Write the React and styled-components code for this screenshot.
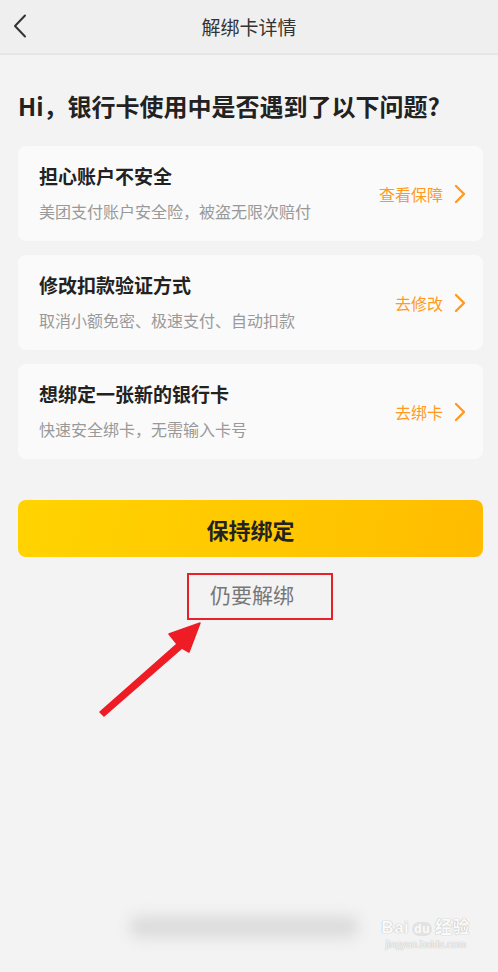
import styled, { createGlobalStyle } from "styled-components";

const GlobalStyle = createGlobalStyle`
  html, body {
    margin: 0;
    padding: 0;
    background: #f3f3f3;
  }
  body {
    font-family: "Noto Sans CJK SC", "Noto Sans", "Liberation Sans", sans-serif;
  }
`;

const options = [
  {
    title: "担心账户不安全",
    desc: "美团支付账户安全险，被盗无限次赔付",
    action: "查看保障",
  },
  {
    title: "修改扣款验证方式",
    desc: "取消小额免密、极速支付、自动扣款",
    action: "去修改",
  },
  {
    title: "想绑定一张新的银行卡",
    desc: "快速安全绑卡，无需输入卡号",
    action: "去绑卡",
  },
];

const Chevron = ({ color, width, height, stroke }) => (
  <svg width={width} height={height} viewBox="0 0 12 20" fill="none">
    <path
      d="M2 2 L10 10 L2 18"
      stroke={color}
      strokeWidth={stroke}
      strokeLinecap="round"
      strokeLinejoin="round"
    />
  </svg>
);

const BackArrow = () => (
  <svg width="14" height="24" viewBox="0 0 14 24" fill="none">
    <path
      d="M12 1.5 L2 12 L12 22.5"
      stroke="#333"
      strokeWidth="2"
      strokeLinecap="round"
      strokeLinejoin="round"
    />
  </svg>
);

const App = () => {
  return (
    <Page>
      <GlobalStyle />
      <Header>
        <BackButton>
          <BackArrow />
        </BackButton>
        <HeaderTitle>解绑卡详情</HeaderTitle>
      </Header>

      <Main>
        <Heading>Hi，银行卡使用中是否遇到了以下问题?</Heading>

        <CardList>
          {options.map((item) => (
            <Card key={item.title}>
              <CardText>
                <CardTitle>{item.title}</CardTitle>
                <CardDesc>{item.desc}</CardDesc>
              </CardText>
              <CardAction>
                <span>{item.action}</span>
                <Chevron color="#ff9a1f" width={12} height={20} stroke={2.4} />
              </CardAction>
            </Card>
          ))}
        </CardList>

        <KeepButton>保持绑定</KeepButton>

        <UnbindRow>
          <UnbindLink>仍要解绑</UnbindLink>
          <Highlight />
          <Pointer width="110" height="100" viewBox="0 0 110 100">
            <path
              d="M1 90 L78 22 L70 12 L101 1 L90 30 L83 26 L5 94 Z"
              fill="#ee1c25"
              stroke="#ee1c25"
              strokeWidth="1.5"
              strokeLinejoin="round"
            />
          </Pointer>
        </UnbindRow>
      </Main>

      <Footer>
        <BlurBar />
        <Watermark>
          <WatermarkLogo>
            Bai<Paw>du</Paw>经验
          </WatermarkLogo>
          <WatermarkUrl>jingyan.baidu.com</WatermarkUrl>
        </Watermark>
      </Footer>
    </Page>
  );
};

export default App;

const Page = styled.div`
  position: relative;
  display: flex;
  flex-direction: column;
  min-height: 100vh;
  background: #f3f3f3;
  overflow: hidden;
`;

const Header = styled.header`
  position: relative;
  display: flex;
  align-items: center;
  justify-content: center;
  height: 53px;
  background: #efefef;
  border-bottom: 2px solid #e6e6e6;
`;

const BackButton = styled.div`
  position: absolute;
  left: 13px;
  top: 14px;
  display: flex;
`;

const HeaderTitle = styled.h1`
  margin: 0;
  font-size: 19px;
  font-weight: 400;
  color: #333;
  line-height: 26px;
`;

const Main = styled.main`
  display: flex;
  flex-direction: column;
  padding: 35px 15px 0 18px;
`;

const Heading = styled.h2`
  margin: 0;
  font-size: 24px;
  line-height: 32px;
  font-weight: 700;
  color: #222;
  white-space: nowrap;
`;

const CardList = styled.div`
  display: flex;
  flex-direction: column;
  gap: 14px;
  margin-top: 24px;
`;

const Card = styled.div`
  display: flex;
  align-items: center;
  justify-content: space-between;
  height: 95px;
  box-sizing: border-box;
  padding: 0 17px 0 21px;
  background: #fafafa;
  border-radius: 8px;
`;

const CardText = styled.div`
  display: flex;
  flex-direction: column;
  gap: 13px;
  padding-bottom: 2px;
`;

const CardTitle = styled.div`
  font-size: 19px;
  line-height: 24px;
  font-weight: 700;
  color: #222;
`;

const CardDesc = styled.div`
  font-size: 16px;
  line-height: 20px;
  color: #999;
`;

const CardAction = styled.div`
  display: flex;
  align-items: center;
  gap: 11px;
  font-size: 16px;
  color: #ff9a1f;
  line-height: 22px;
`;

const KeepButton = styled.button`
  margin-top: 41px;
  height: 57px;
  border: none;
  border-radius: 8px;
  background: linear-gradient(100deg, #ffd300 0%, #ffc800 55%, #ffbc00 100%);
  font-family: inherit;
  font-size: 22px;
  font-weight: 700;
  color: #222;
  cursor: pointer;
`;

const UnbindRow = styled.div`
  position: relative;
  display: flex;
  justify-content: center;
  margin-top: 22px;
`;

const UnbindLink = styled.span`
  font-size: 21px;
  line-height: 30px;
  color: #777;
  padding-left: 3px;
`;

const Highlight = styled.div`
  position: absolute;
  left: 169px;
  top: -6px;
  width: 146px;
  height: 47px;
  box-sizing: border-box;
  border: 2px solid #e8202a;
`;

const Pointer = styled.svg`
  position: absolute;
  left: 81px;
  top: 43px;
`;

const Footer = styled.footer`
  position: relative;
  margin-top: auto;
  height: 92px;
  display: flex;
  justify-content: center;
`;

const BlurBar = styled.div`
  margin-top: 36px;
  margin-right: 10px;
  width: 230px;
  height: 22px;
  border-radius: 11px;
  background: #dcdcdc;
  filter: blur(7px);
`;

const Watermark = styled.div`
  position: absolute;
  right: 28px;
  top: 38px;
  display: flex;
  flex-direction: column;
  align-items: center;
  font-family: "Liberation Sans", "Noto Sans CJK SC", sans-serif;
  color: #fafafa;
  text-shadow: 0 0 1px #bbb, 0 0 1px #bbb;
`;

const WatermarkLogo = styled.div`
  font-size: 17px;
  font-weight: 700;
  line-height: 20px;
  letter-spacing: 0.5px;
`;

const Paw = styled.span`
  display: inline-block;
  margin: 0 3px;
  padding: 0 2px;
  font-size: 12px;
  line-height: 14px;
  border-radius: 7px;
  background: #e2e2e2;
  color: #fafafa;
  text-shadow: none;
`;

const WatermarkUrl = styled.div`
  font-size: 10px;
  line-height: 14px;
`;
